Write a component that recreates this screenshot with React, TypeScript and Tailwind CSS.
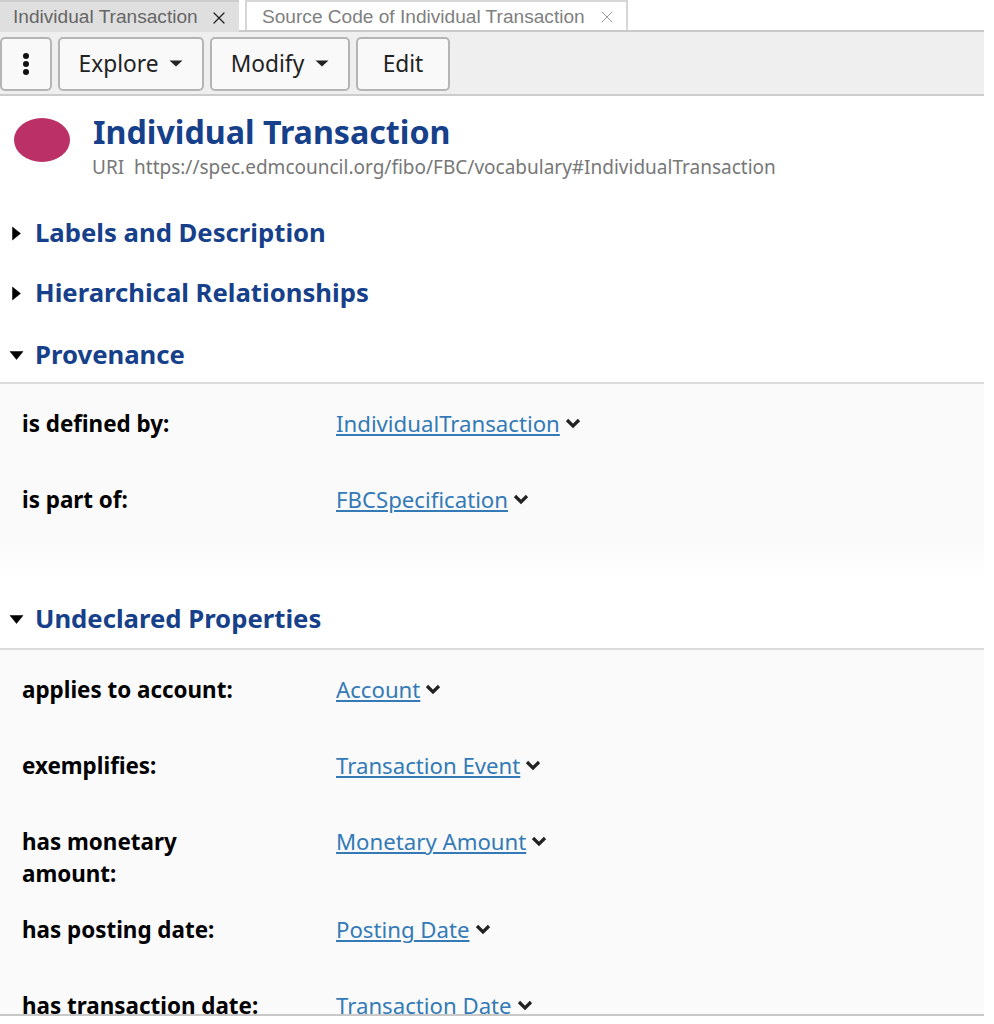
import { X } from "lucide-react";

const caretDown = (
  <svg width="15" height="9" viewBox="0 0 15 9" className="shrink-0">
    <path d="M1 0.5h13L7.5 8.5z" fill="#000" stroke="#000" strokeWidth="0.5" strokeLinejoin="round" />
  </svg>
);

const caretRight = (
  <svg width="9" height="15" viewBox="0 0 9 15" className="shrink-0">
    <path d="M0.5 1v13L8.5 7.5z" fill="#000" stroke="#000" strokeWidth="0.5" strokeLinejoin="round" />
  </svg>
);

function Row({ label, value, h }: { label: string; value: string; h: string }) {
  return (
    <div className={`flex ${h}`}>
      <div className="w-[314px] pr-[68px] text-[22.4px] leading-[32px] font-bold text-black">{label}</div>
      <div className="flex items-start text-[22.2px] leading-[32px]">
        <a className="text-[#337ab7] underline decoration-2 underline-offset-2">{value}</a>
        <svg width="16" height="11" viewBox="0 0 16 11" className="ml-[5px] mt-[10px] shrink-0">
          <path d="M2 2l6 6 6-6" fill="none" stroke="#222" strokeWidth="3.2" />
        </svg>
      </div>
    </div>
  );
}

function MenuButton({ label, caret, w }: { label: string; caret?: boolean; w: string }) {
  return (
    <button className={`flex h-[54px] ${w} items-center justify-center gap-[11px] rounded-[5px] border-2 border-[#b5b5b5] bg-[#f9f9fa] pt-[1px] text-[22.7px] text-[#222]`}>
      {label}
      {caret && (
        <svg width="14" height="7" viewBox="0 0 14 7" className="-mt-[2px]">
          <path d="M0.5 0.5h13L7 6.5z" fill="#222" />
        </svg>
      )}
    </button>
  );
}

function Heading({ label, open }: { label: string; open?: boolean }) {
  return (
    <div className="flex h-[44px] items-center">
      <div className="flex w-[35px] justify-center pr-[3px]">{open ? caretDown : caretRight}</div>
      <h2 className="text-[25.7px] font-bold text-[#16408a]">{label}</h2>
    </div>
  );
}

export default function App() {
  return (
    <div className="h-[1024px] w-[994px] overflow-hidden bg-white font-['Noto_Sans',sans-serif]">
      <div className="h-[1016px] w-[984px]">
        {/* tabs */}
        <div className="flex h-[32px] border-b-2 border-[#c9c9c9] font-['Liberation_Sans',sans-serif] text-[19.1px]">
          <div className="flex h-[32px] w-[239px] items-center justify-between border-t-2 border-[#cccccc] bg-[#dfdfdf] pl-[13px] pr-[10px] pt-[1px] text-[#666]">
            Individual Transaction
            <X size={20} strokeWidth={1.5} className="text-[#222]" />
          </div>
          <div className="ml-[6px] flex h-[30px] w-[383px] items-center justify-between border-2 border-b-0 border-[#d6d6d6] pl-[15px] pr-[9px] pt-[2px] text-[#808080]">
            Source Code of Individual Transaction
            <X size={20} strokeWidth={1.2} className="text-[#999]" />
          </div>
        </div>

        {/* toolbar */}
        <div className="flex h-[64px] gap-[6px] border-b-2 border-[#cccccc] bg-[#efefef] pt-[5px]">
          <button className="flex h-[54px] w-[52px] flex-col items-center justify-center gap-[2px] rounded-[5px] border-2 border-[#b5b5b5] bg-[#f9f9fa]">
            <span className="h-[6px] w-[6px] rounded-full bg-[#111]" />
            <span className="h-[6px] w-[6px] rounded-full bg-[#111]" />
            <span className="h-[6px] w-[6px] rounded-full bg-[#111]" />
          </button>
          <MenuButton label="Explore" caret w="w-[146px]" />
          <MenuButton label="Modify" caret w="w-[140px]" />
          <MenuButton label="Edit" w="w-[94px]" />
        </div>

        {/* title */}
        <div className="flex h-[102px] pl-[14px] pt-[21px]">
          <div className="mt-[1px] h-[44px] w-[56px] rounded-[50%] bg-[#bb3066]" />
          <div className="ml-[23px] -mt-[5px]">
            <h1 className="text-[32.2px] leading-[40px] font-bold text-[#16408a]">Individual Transaction</h1>
            <div className="mt-[1px] -ml-[1px] text-[19px] leading-[28px] text-[#777]">URI&nbsp; https://spec.edmcouncil.org/fibo/FBC/vocabulary#IndividualTransaction</div>
          </div>
        </div>

        <div className="mt-[13px]">
          <Heading label="Labels and Description" />
        </div>
        <div className="mt-[16px]">
          <Heading label="Hierarchical Relationships" />
        </div>
        <div className="mt-[18px]">
          <Heading label="Provenance" open />
        </div>

        <div className="mt-[5px] h-[196px] border-t-2 border-[#dcdcdc] bg-gradient-to-b from-[#fafafa] from-[80%] to-white pl-[22px] pt-[24px]">
          <Row label="is defined by:" value="IndividualTransaction" h="h-[76px]" />
          <Row label="is part of:" value="FBCSpecification" h="h-[76px]" />
        </div>

        <div className="mt-[19px]">
          <Heading label="Undeclared Properties" open />
        </div>

        <div className="mt-[7px] h-[368px] overflow-hidden border-y-2 border-t-[#dcdcdc] border-b-[#c8c8c8] bg-[#fafafa] pl-[22px] pt-[24px]">
          <Row label="applies to account:" value="Account" h="h-[76px]" />
          <Row label="exemplifies:" value="Transaction Event" h="h-[76px]" />
          <Row label="has monetary amount:" value="Monetary Amount" h="h-[88px]" />
          <Row label="has posting date:" value="Posting Date" h="h-[76px]" />
          <Row label="has transaction date:" value="Transaction Date" h="h-[76px]" />
        </div>
      </div>
    </div>
  );
}
